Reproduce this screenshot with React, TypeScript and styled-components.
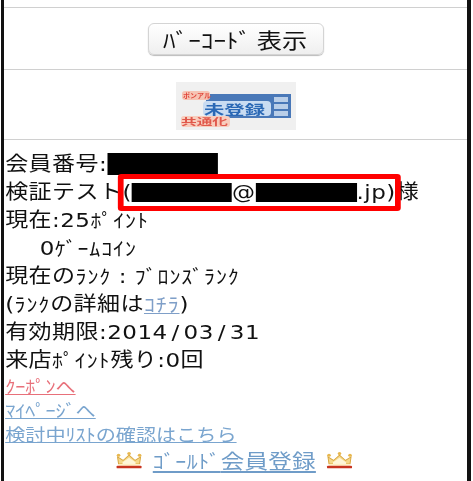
import React from "react";
import styled, { createGlobalStyle } from "styled-components";

const Global = createGlobalStyle`
  html, body { margin: 0; padding: 0; background: #fff; }
  body { font-family: "DejaVu Sans", "Noto Sans CJK JP", sans-serif; overflow: hidden; }
`;

const Frame = styled.div`
  width: 470px;
  height: 481px;
  margin-left: 1px;
  box-sizing: border-box;
  border-left: 3px solid #111;
  border-right: 4px solid #111;
  background: #fff;
  overflow: hidden;
`;

const Section = styled.div<{ $h: number }>`
  height: ${(p) => p.$h}px;
  box-sizing: border-box;
  border-bottom: 1px solid #d0d0d0;
  display: flex;
  align-items: center;
  justify-content: center;
`;

const BarcodeButton = styled.button`
  width: 176px;
  height: 32px;
  padding: 0;
  border: 1px solid #d4d4d4;
  border-radius: 6px;
  background: linear-gradient(#ffffff, #efefef);
  box-shadow: 0 1px 1px #bbb;
  font-family: "Noto Sans CJK JP", sans-serif;
  font-size: 21px;
  line-height: 30px;
  color: #111;
  white-space: nowrap;
`;

const ButtonLabel = styled.span`
  display: inline-block;
  transform: scaleX(1.2);
  filter: blur(0.3px);
`;

const Banner = styled.svg`
  display: block;
  margin-top: 2px;
`;

const Stretched = styled.div`
  width: calc(463px / 1.15);
  transform: scaleX(1.15);
  transform-origin: left top;
  filter: blur(0.3px);
`;

const Info = styled.div`
  padding: 10px 0 0 1px;
`;

const Line = styled.div<{ $indent?: number }>`
  height: 28px;
  font-size: 20px;
  letter-spacing: 0.4px;
  line-height: 28px;
  color: #111;
  white-space: nowrap;
  padding-left: ${(p) => p.$indent ?? 0}px;
  display: flex;
  align-items: center;
`;

const Kana = styled.span`
  font-family: "Noto Sans CJK JP", sans-serif;
  font-size: 19px;
  letter-spacing: 0.8px;
`;

const Slash = styled.span`
  margin: 0 3.4px;
`;

const Redact = styled.span<{ $w: number; $h: number }>`
  display: inline-block;
  width: ${(p) => p.$w}px;
  height: ${(p) => p.$h}px;
  background: #000;
`;

const Highlight = styled.span`
  position: relative;
  display: flex;
  align-items: center;
  &::after {
    content: "";
    position: absolute;
    left: -4px;
    right: -4px;
    top: -4px;
    bottom: -5px;
    border: 5px solid #f00;
    border-radius: 3px;
    pointer-events: none;
  }
`;

const InlineLink = styled.a`
  font-family: "Noto Sans CJK JP", sans-serif;
  color: #7f9fc8;
  font-size: 19px;
  letter-spacing: 0.8px;
  text-decoration: underline;
`;

const LinkRow = styled.a<{ $color: string }>`
  display: block;
  width: fit-content;
  height: 24px;
  font-family: "Noto Sans CJK JP", sans-serif;
  font-size: 17.5px;
  line-height: 24px;
  color: ${(p) => p.$color};
  text-decoration: underline;
  text-decoration-thickness: 1px;
  white-space: nowrap;
`;

const Links = styled.div`
  padding: 0 0 0 1px;
  display: flex;
  flex-direction: column;
`;

const GoldRow = styled.div`
  display: flex;
  align-items: center;
  justify-content: center;
  gap: 8.5px;
  height: 30px;
  margin-top: -1px;
  padding-right: 2px;
`;

const GoldLink = styled.a`
  font-family: "Noto Sans CJK JP", sans-serif;
  font-size: 20.5px;
  letter-spacing: 0.2px;
  color: #6f9cc8;
  text-decoration: underline;
  white-space: nowrap;
  line-height: 26px;
`;

const GoldKana = styled.span`
  font-size: 19px;
  letter-spacing: 0.5px;
`;

const Crown = () => (
  <svg width="23.5" height="20" viewBox="0 0 27 21">
    <path d="M2 7 L7.5 11 L13.5 5 L19.5 11 L25 7 L24 15 H3 Z" fill="#f5d98a" stroke="#d9a63f" strokeWidth="1" />
    <path d="M7 13 L13.5 8 L20 13 V15 H7 Z" fill="#fff6d8" />
    <circle cx="3" cy="5" r="1.8" fill="#e8b84f" />
    <circle cx="13.5" cy="3" r="1.8" fill="#e8b84f" />
    <circle cx="24" cy="5" r="1.8" fill="#e8b84f" />
    <rect x="3" y="15" width="21" height="2" fill="#fff0c0" />
    <rect x="1" y="17" width="25" height="3" rx="1" fill="#c8341f" />
  </svg>
);

export default function App() {
  return (
    <>
      <Global />
      <Frame>
        <Section $h={8} />
        <Section $h={62}>
          <BarcodeButton>
            <ButtonLabel>ﾊﾞｰｺｰﾄﾞ 表示</ButtonLabel>
          </BarcodeButton>
        </Section>
        <Section $h={70}>
          <Banner width="120" height="48" viewBox="0 0 120 48">
            <defs>
              <filter id="soft"><feGaussianBlur stdDeviation="0.7" /></filter>
            </defs>
            <rect width="120" height="48" fill="#f0f0f0" />
            <g filter="url(#soft)">
              <rect x="30" y="12" width="85" height="24" fill="#4a78b8" />
              <rect x="27" y="19" width="68" height="15" rx="4" fill="#c9dcf2" />
              <rect x="6" y="9" width="28" height="9" rx="3" fill="#f6c4b4" />
              <rect x="5" y="34" width="49" height="11" rx="3" fill="#f8cdbd" />
              <text x="7" y="16" fontSize="7" fontWeight="700" fill="#e0483c" fontFamily="Noto Sans CJK JP">ポンアル</text>
              <text x="5" y="43" fontSize="9" fontWeight="700" fill="#e0584c" fontFamily="Noto Sans CJK JP" textLength={47} lengthAdjust="spacingAndGlyphs">共通化</text>
              <text x="28" y="32" fontSize="13" fontWeight="700" fill="#2a68b5" fontFamily="Noto Sans CJK JP" textLength={61} lengthAdjust="spacingAndGlyphs">未登録</text>
              <rect x="98" y="15" width="14" height="5" fill="#b9cee8" />
              <rect x="98" y="22" width="14" height="5" fill="#b9cee8" />
              <rect x="98" y="29" width="14" height="5" fill="#b9cee8" />
            </g>
          </Banner>
        </Section>
        <Stretched>
          <Info>
            <Line>会員番号:<Redact $w={96} $h={22} /></Line>
            <Line>
              検証テスト
              <Highlight>(<Redact $w={87} $h={19} />@<Redact $w={88} $h={19} />.jp)</Highlight>
              様
            </Line>
            <Line>現在:25<Kana>ﾎﾟｲﾝﾄ</Kana></Line>
            <Line $indent={30}>0<Kana>ｹﾞｰﾑｺｲﾝ</Kana></Line>
            <Line>現在の<Kana>ﾗﾝｸ</Kana>&nbsp;:&nbsp;<Kana>ﾌﾞﾛﾝｽﾞﾗﾝｸ</Kana></Line>
            <Line>(<Kana>ﾗﾝｸ</Kana>の詳細は<InlineLink>ｺﾁﾗ</InlineLink>)</Line>
            <Line>有効期限:2014<Slash>/</Slash>03<Slash>/</Slash>31</Line>
            <Line>来店<Kana>ﾎﾟｲﾝﾄ</Kana>残り:0回</Line>
          </Info>
          <Links>
            <LinkRow $color="#e8707a">ｸｰﾎﾟﾝへ</LinkRow>
            <LinkRow $color="#7aa5cf">ﾏｲﾍﾟｰｼﾞへ</LinkRow>
            <LinkRow $color="#7aa5cf">検討中ﾘｽﾄの確認はこちら</LinkRow>
          </Links>
          <GoldRow>
            <Crown />
            <GoldLink><GoldKana>ｺﾞｰﾙﾄﾞ</GoldKana>会員登録</GoldLink>
            <Crown />
          </GoldRow>
        </Stretched>
      </Frame>
    </>
  );
}
